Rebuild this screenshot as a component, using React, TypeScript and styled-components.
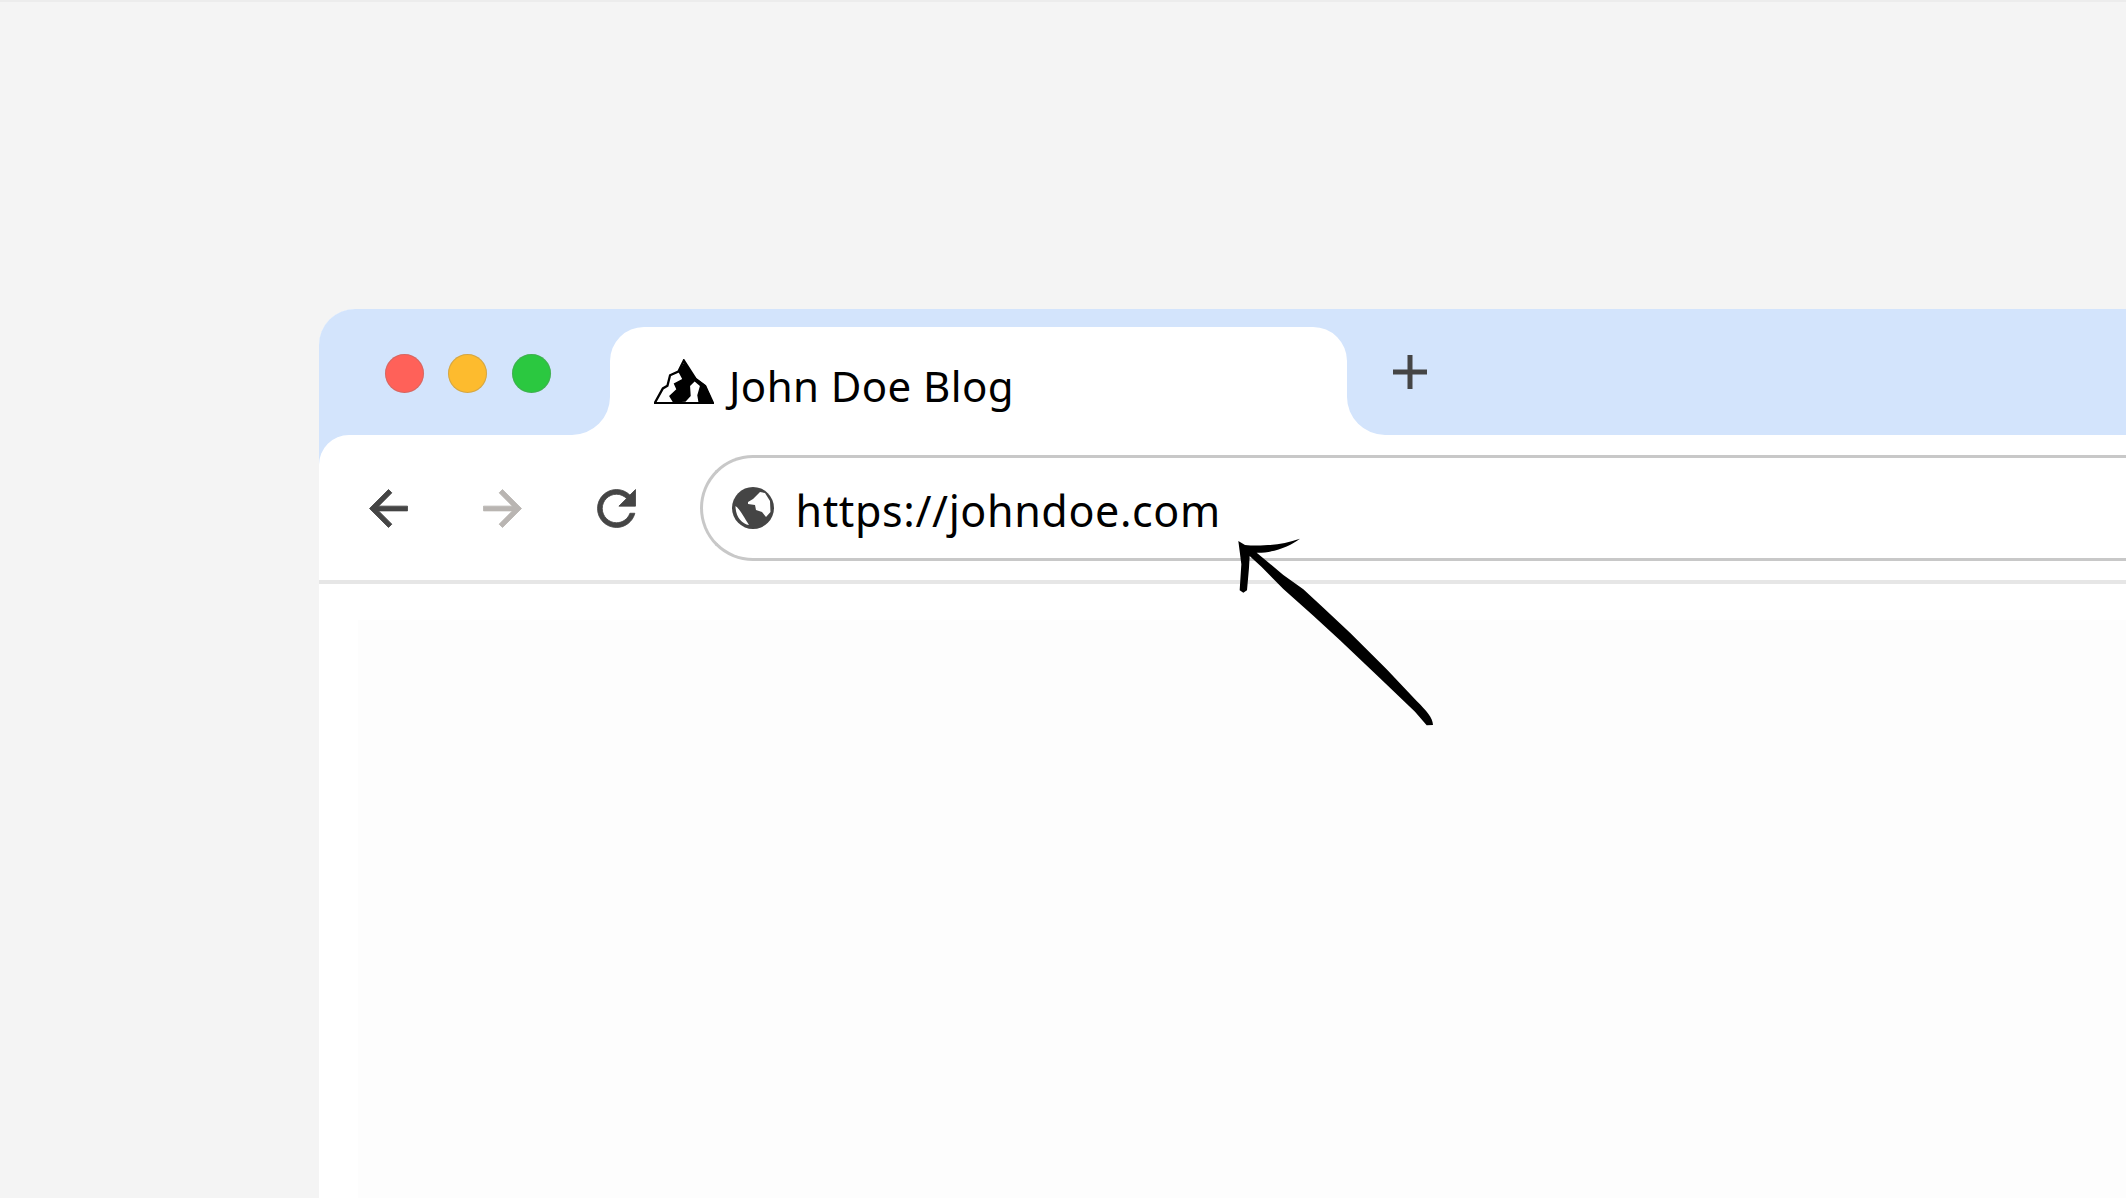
import React from 'react'
import styled, {createGlobalStyle} from 'styled-components'

const GlobalStyle = createGlobalStyle`
  html, body {
    margin: 0;
    height: 100%;
    overflow: hidden;
    background: #f4f4f4;
  }
`

const Page = styled.div`
  position: relative;
  width: 2126px;
  height: 1198px;
  overflow: hidden;
  box-sizing: border-box;
  padding: 307px 0 0 319px;
  border-top: 2px solid #ececec;
  background: #f4f4f4;
  font-family: 'Noto Sans', 'Open Sans', sans-serif;
  color: #111;
`

const BrowserWindow = styled.div`
  width: 2000px;
  height: 1000px;
  background: #d3e4fc;
  border-radius: 36px 0 0 0;
  overflow: hidden;
`

const TitleBar = styled.div`
  display: grid;
  grid-template-columns: 291px 737px 1fr;
  height: 126px;
  background: #fff;
`

const ControlsCell = styled.div`
  display: flex;
  align-items: flex-start;
  gap: 24.5px;
  padding: 45px 0 0 65.5px;
  background: #d3e4fc;
  border-bottom-right-radius: 38px;
`

const Dot = styled.span<{$color: string}>`
  width: 39px;
  height: 39px;
  border-radius: 50%;
  background: ${p => p.$color};
  box-shadow: inset 0 0 0 1px rgba(120, 120, 120, 0.3);
`

const TabCell = styled.div`
  padding-top: 18px;
  background: #d3e4fc;
`

const Tab = styled.div`
  display: flex;
  align-items: center;
  gap: 15px;
  height: 108px;
  box-sizing: border-box;
  padding: 0 0 0 44px;
  background: #fff;
  border-radius: 34px 34px 0 0;
`

const TabTitle = styled.span`
  margin-top: 10px;
  font-size: 42px;
  letter-spacing: 0.4px;
  line-height: 1;
  color: #000;
`

const NewTabCell = styled.div`
  padding: 46px 0 0 46px;
  background: #d3e4fc;
  border-bottom-left-radius: 38px;
`

const PlusIcon = styled.svg`
  display: block;
  width: 34px;
  height: 34px;
`

const Toolbar = styled.div`
  display: flex;
  align-items: center;
  gap: 57px;
  height: 149px;
  box-sizing: border-box;
  padding-left: 40.5px;
  background: #fff;
  border-radius: 30px 0 0 0;
  border-bottom: 4px solid #e6e6e6;
`

const NavIcon = styled.svg<{$muted?: boolean}>`
  flex: none;
  width: 57px;
  height: 57px;
  margin-top: 1px;
  fill: ${p => (p.$muted ? '#b9b5b2' : '#454545')};
  stroke: ${p => (p.$muted ? '#b9b5b2' : '#454545')};
  stroke-width: 0.35px;
`

const AddressBar = styled.div`
  display: flex;
  flex: 1;
  align-items: center;
  gap: 22px;
  height: 106px;
  box-sizing: border-box;
  margin-left: -2px;
  padding-left: 29px;
  border: 3px solid #c8c8c8;
  border-right: 0;
  border-radius: 53px 0 0 53px;
`

const GlobeIcon = styled.svg`
  flex: none;
  width: 42px;
  height: 42px;
`

const UrlText = styled.span`
  margin-top: 5px;
  font-size: 43px;
  letter-spacing: 0.62px;
  line-height: 1;
  color: #000;
`

const ContentArea = styled.div`
  height: 100%;
  padding: 36px 0 0 39px;
  background: #fff;
`

const ContentPanel = styled.div`
  height: 100%;
  background: #fdfdfd;
`

const Arrow = styled.svg`
  position: absolute;
  left: 1200px;
  top: 519px;
  width: 260px;
  height: 220px;
`

const MountainIcon = () => (
  <svg width="60" height="45" viewBox="12 12 183 136" style={{flex: 'none'}}>
    <path
      d="M14 146 L39 101 L53 93 L61 61 L86 50 L103 16 L139 72 L168 94 L192 146 Z"
      fill="#fff"
      stroke="#000"
      strokeWidth="7"
    />
    <path
      d="M104 22 L86 50 L98 72 L72 86 L80 104 L58 124 L70 144 L108 142 L124 124 L122 94 L136 80 L152 94 L144 122 L148 146 L194 148 L170 92 L140 70 Z"
      fill="#000"
    />
  </svg>
)

const GlobeGlyph = () => (
  <GlobeIcon viewBox="0 0 42 42">
    <circle cx="21" cy="21" r="21" fill="#454545" />
    <path
      d="M16 15 L21 12 L28 5 L33 6 L38 14 L38.5 25 L34 30 L30 25 L24 23 L23 18 L16 17 Z"
      fill="#fff"
    />
    <path d="M3.5 19 C7 21 12 30 17 38 C10 37 3.5 30 3.5 19 Z" fill="#fff" />
  </GlobeIcon>
)

export default function App() {
  return (
    <>
      <GlobalStyle />
      <Page>
        <BrowserWindow>
          <TitleBar>
            <ControlsCell>
              <Dot $color="#ff6159" />
              <Dot $color="#fdbb2e" />
              <Dot $color="#2bc840" />
            </ControlsCell>
            <TabCell>
              <Tab>
                <MountainIcon />
                <TabTitle>John Doe Blog</TabTitle>
              </Tab>
            </TabCell>
            <NewTabCell>
              <PlusIcon viewBox="0 0 34 34">
                <path d="M17 0 V34 M0 17 H34" stroke="#454545" strokeWidth="5" />
              </PlusIcon>
            </NewTabCell>
          </TitleBar>
          <Toolbar>
            <NavIcon viewBox="0 0 24 24">
              <path d="M20 11H7.83l5.59-5.59L12 4l-8 8 8 8 1.41-1.41L7.83 13H20v-2z" />
            </NavIcon>
            <NavIcon $muted viewBox="0 0 24 24">
              <path d="M12 4l-1.41 1.41L16.17 11H4v2h12.17l-5.58 5.59L12 20l8-8z" />
            </NavIcon>
            <NavIcon viewBox="0 0 24 24">
              <path d="M17.65 6.35C16.2 4.9 14.21 4 12 4c-4.42 0-7.99 3.58-7.99 8s3.57 8 7.99 8c3.73 0 6.84-2.55 7.73-6h-2.08c-.82 2.33-3.04 4-5.65 4-3.31 0-6-2.69-6-6s2.69-6 6-6c1.66 0 3.14.69 4.22 1.78L13 11h7V4l-2.35 2.35z" />
            </NavIcon>
            <AddressBar>
              <GlobeGlyph />
              <UrlText>https://johndoe.com</UrlText>
            </AddressBar>
          </Toolbar>
          <ContentArea>
            <ContentPanel />
          </ContentArea>
        </BrowserWindow>
        <Arrow viewBox="0 0 780 660">
          <path
            d="M115 60 L135 72 C175 76 240 74 300 53 C270 76 220 96 170 95 L250 162 L310 205 L370 260 L450 335 L560 445 L650 540 C680 570 698 590 699 612 L680 613 L645 572 L540 472 L420 358 L340 284 L250 204 L185 138 L149 105 L147 140 L141 208 L130 215 L119 208 L124 130 Z"
            fill="#000"
          />
        </Arrow>
      </Page>
    </>
  )
}
